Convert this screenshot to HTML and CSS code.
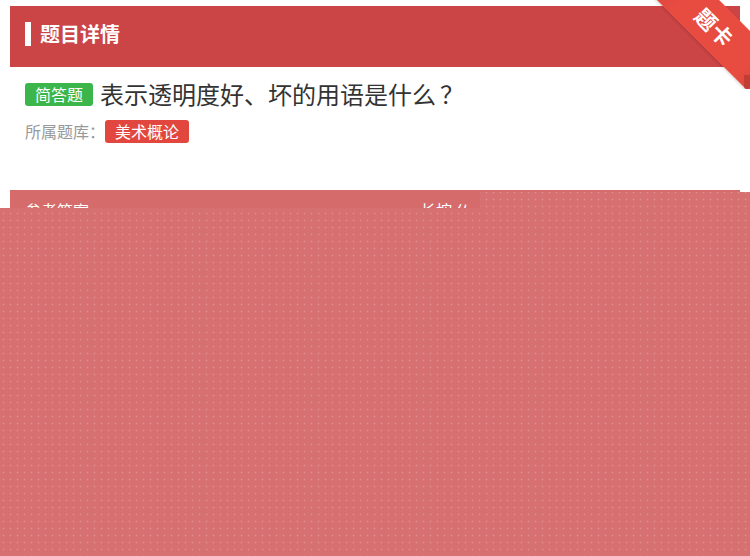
FILE: index.html
```html
<!DOCTYPE html>
<html lang="zh-CN">
<head>
<meta charset="utf-8">
<link rel="stylesheet" href="styles.css">
</head>
<body>
<div class="page">
  <div class="header"><span class="bar"></span><span class="header-title">题目详情</span></div>
  <div class="card">
    <div class="question">
      <span class="tag tag-green">简答题</span>
      <span class="q-text">表示透明度好、坏的用语是什么<span class="q-mark">？</span></span>
    </div>
    <div class="bank">
      <span class="bank-label">所属题库<span class="colon">：</span></span>
      <span class="tag tag-red">美术概论</span>
    </div>
  </div>
  <div class="answer-head">
    <span class="answer-title">参考答案</span>
    <span class="answer-tip">长按 仏</span>
  </div>
</div>
<div class="ribbon-box"><div class="ribbon">题卡</div><div class="ribbon-fold"></div></div>
<div class="overlay"></div>
</body>
</html>
```
FILE: styles.css
```css
* { box-sizing: border-box; }
html, body { margin: 0; padding: 0; background: #fff; }
body {
  width: 750px;
  height: 556px;
  overflow: hidden;
  position: relative;
  font-family: "Noto Sans CJK SC", "Noto Sans", sans-serif;
}
.page { padding: 6px 10px 0; }
.header {
  height: 61px;
  background: #cb4446;
  display: flex;
  align-items: center;
  padding-left: 15px;
  padding-bottom: 5px;
  gap: 9px;
}
.bar { width: 6px; height: 24px; background: #fff; }
.header-title { color: #fff; font-size: 20px; font-weight: bold; line-height: 1; }
.card { height: 123px; padding: 12px 15px 0; }
.question { display: flex; align-items: center; gap: 7px; height: 30px; }
.tag {
  display: inline-block;
  color: #fff;
  font-size: 16px;
  line-height: 23px;
  height: 23px;
  padding: 0 10px;
  border-radius: 3px;
}
.tag-green { background: #3cb64a; }
.tag-red { background: #e2473f; }
.q-text { color: #333; font-size: 24px; line-height: 30px; }
.q-mark { display: inline-block; width: 32px; text-align: center; }
.bank { display: flex; align-items: center; margin-top: 10px; height: 24px; }
.bank-label { color: #999; font-size: 16px; }
.colon { display: inline-block; width: 16px; text-align: center; }
.answer-head {
  height: 40px;
  background: #d56b6b;
  display: flex;
  align-items: center;
  padding-left: 15px;
  color: #fff;
  font-size: 16px;
}
.answer-title { width: 395px; }
.ribbon-box {
  position: absolute;
  top: 0;
  right: 0;
  width: 100px;
  height: 89px;
  overflow: hidden;
}
.ribbon {
  position: absolute;
  width: 160px;
  height: 44px;
  left: -15px;
  top: 5px;
  transform: rotate(45deg);
  background: linear-gradient(90deg, #d9453c 0%, #e84c41 25%, #e84c41 80%, #d4443b 100%);
  color: #fff;
  font-size: 21px;
  font-weight: bold;
  line-height: 44px;
  text-align: center;
  letter-spacing: 1px;
  box-shadow: 0 1px 3px rgba(0,0,0,0.18);
}
.ribbon-fold {
  position: absolute;
  right: 0;
  bottom: 0;
  width: 6px;
  height: 14px;
  border-radius: 0 0 3px 3px;
  background: #c23c34;
}
.overlay {
  position: absolute;
  left: 0;
  top: 0;
  width: 750px;
  height: 556px;
  background-color: #d77171;
  background-image: radial-gradient(circle, rgba(240,170,170,0.5) 0.7px, transparent 1.1px);
  background-size: 7px 7px;
  clip-path: polygon(480px 192px, 750px 192px, 750px 556px, 0 556px, 0 208px, 480px 208px);
}
```
